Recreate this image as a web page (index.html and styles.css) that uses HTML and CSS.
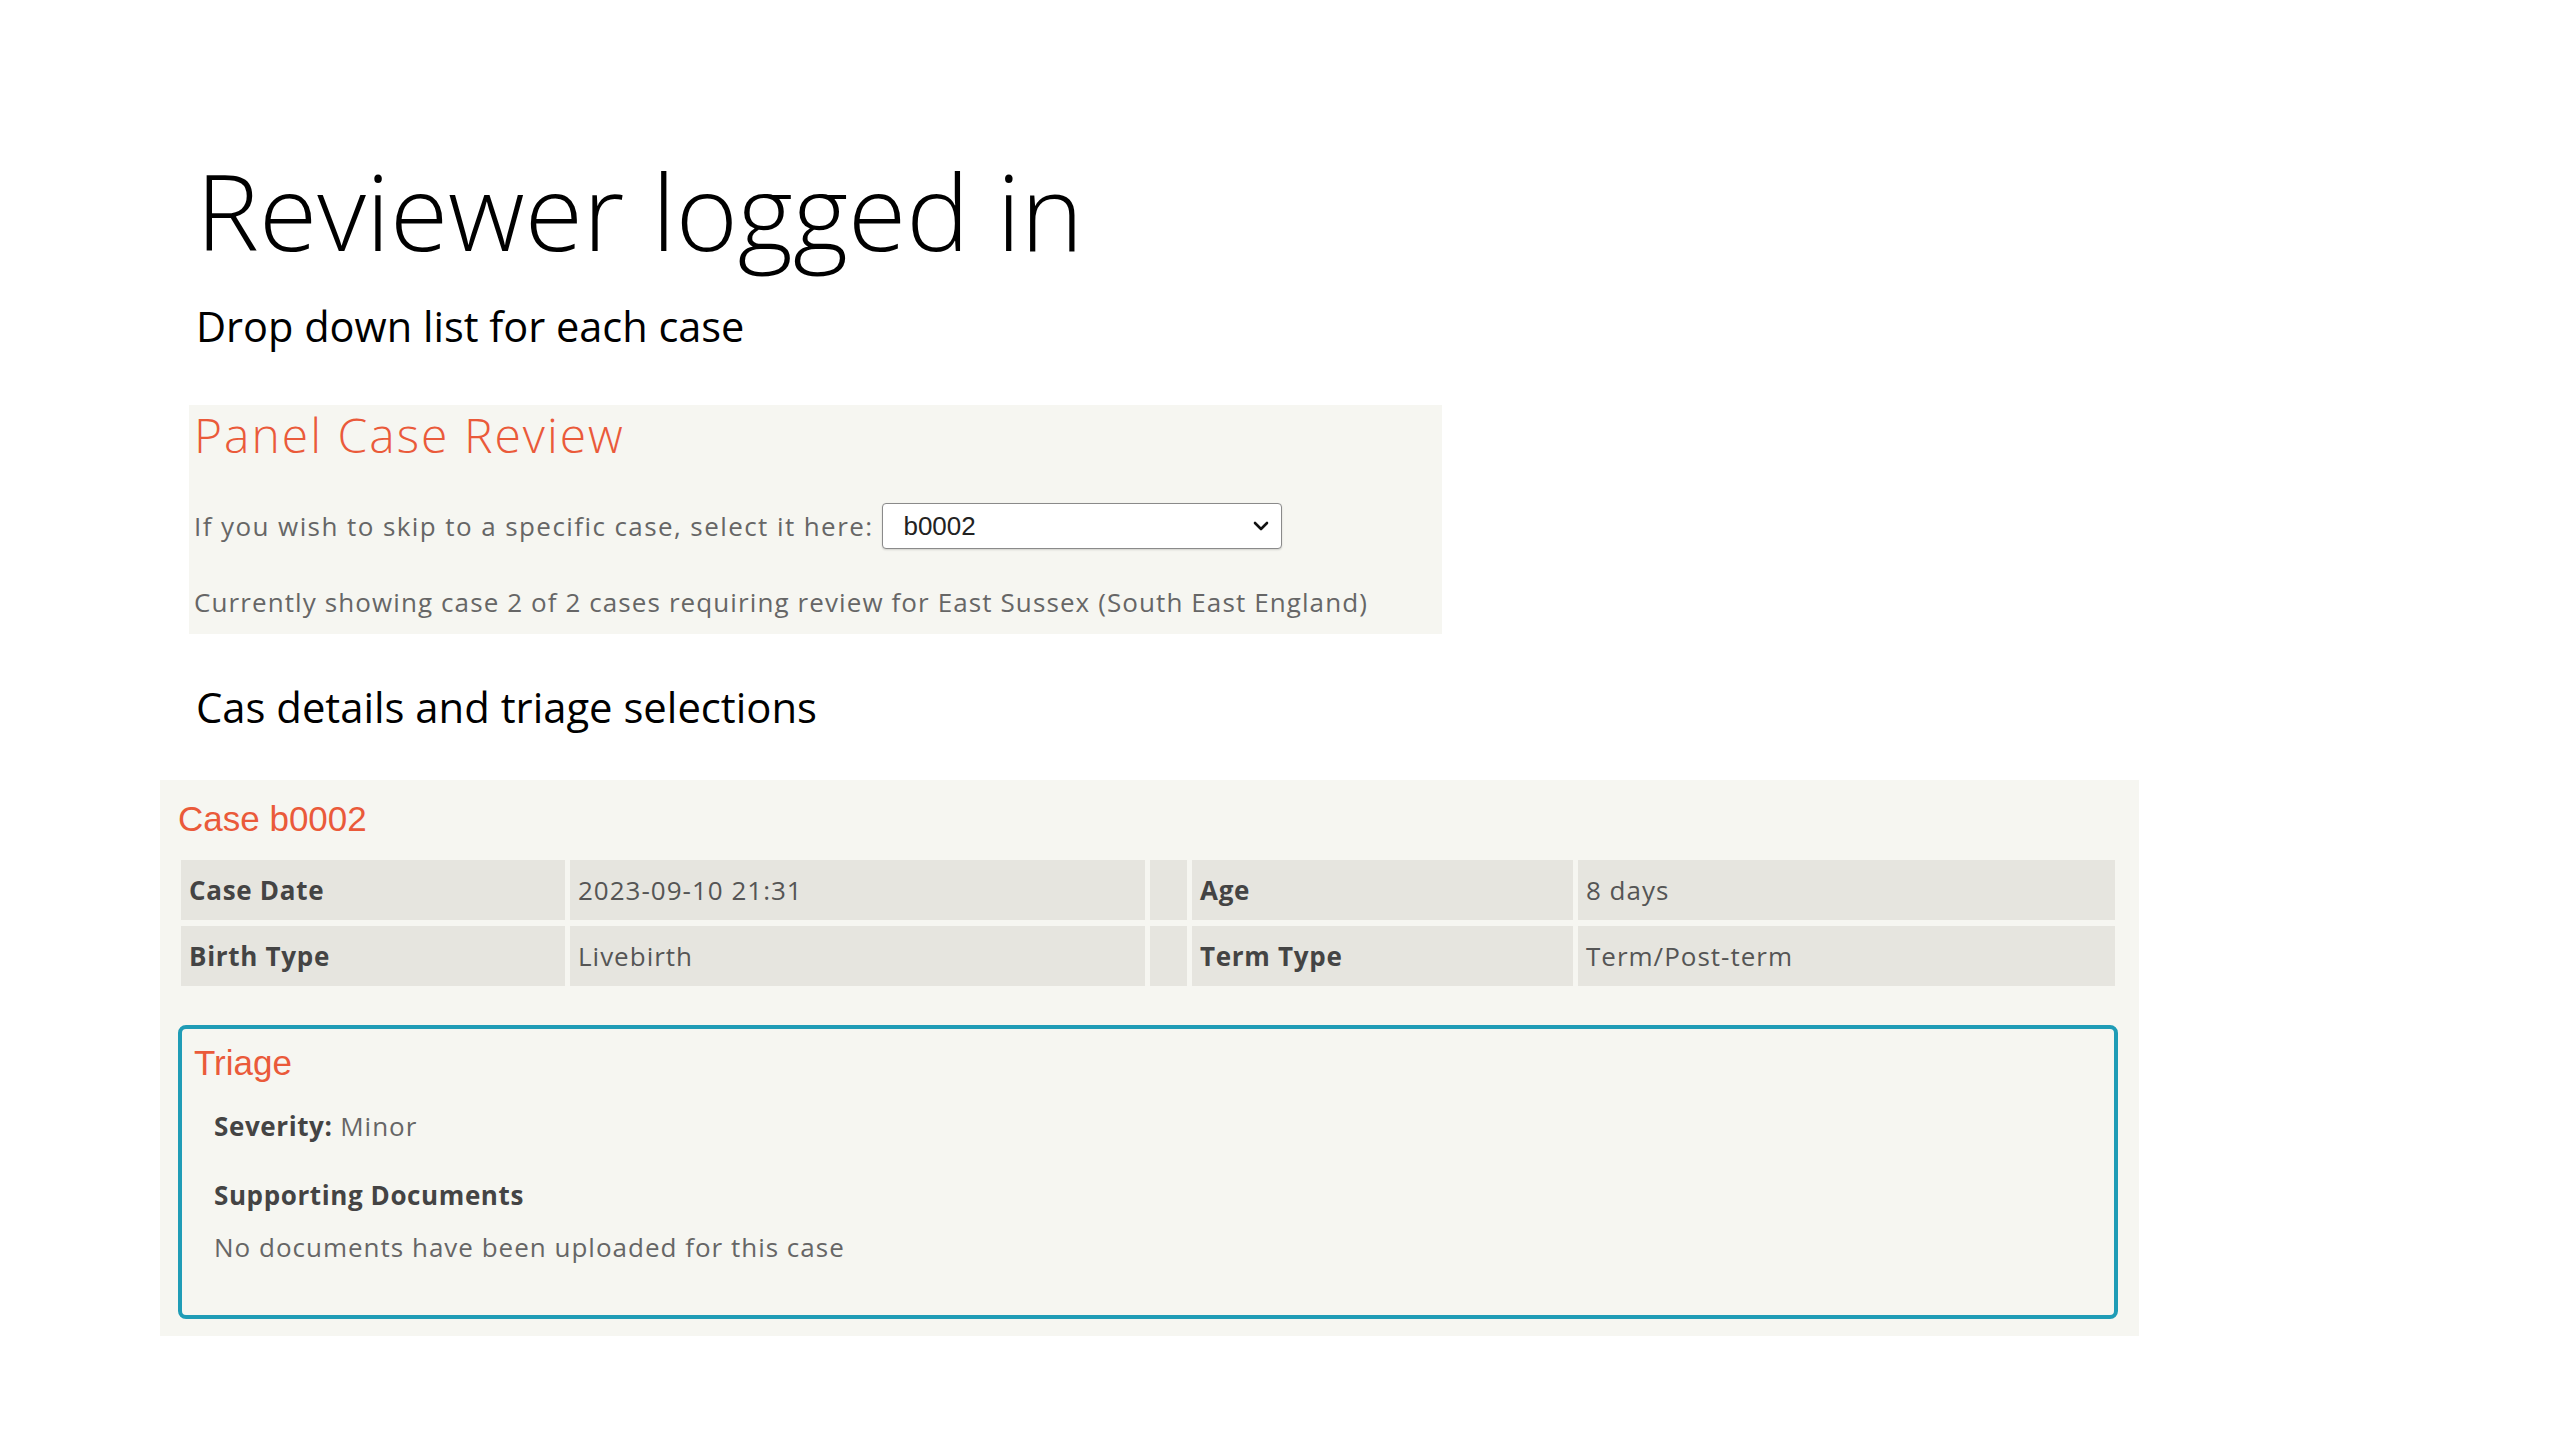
FILE: index.html
```html
<!DOCTYPE html>
<html lang="en">
<head>
<meta charset="utf-8">
<title>Reviewer logged in</title>
<link rel="stylesheet" href="styles.css">
</head>
<body>
<main class="slide">
  <h1 class="slide-title">Reviewer logged in</h1>
  <p class="slide-sub">Drop down list for each case</p>

  <section class="panel">
    <h2 class="panel-title">Panel Case Review</h2>
    <div class="skip-row">
      <span class="skip-label">If you wish to skip to a specific case, select it here:</span>
      <div class="select">
        <span class="select-value">b0002</span>
        <svg class="select-chev" viewBox="0 0 16 10" width="16" height="10"><path d="M2 2 L8 8 L14 2" fill="none" stroke="#111" stroke-width="2.6" stroke-linecap="round" stroke-linejoin="round"/></svg>
      </div>
    </div>
    <p class="panel-note">Currently showing case 2 of 2 cases requiring review for East Sussex (South East England)</p>
  </section>

  <p class="slide-sub slide-sub2">Cas details and triage selections</p>

  <section class="case">
    <h3 class="case-title">Case b0002</h3>
    <div class="case-grid">
      <div class="cell label">Case Date</div>
      <div class="cell">2023-09-10 21:31</div>
      <div class="cell"></div>
      <div class="cell label">Age</div>
      <div class="cell">8 days</div>
      <div class="cell label">Birth Type</div>
      <div class="cell">Livebirth</div>
      <div class="cell"></div>
      <div class="cell label">Term Type</div>
      <div class="cell">Term/Post-term</div>
    </div>
    <div class="triage">
      <h4 class="triage-title">Triage</h4>
      <div class="triage-body">
        <p class="triage-line"><b>Severity:</b> Minor</p>
        <p class="triage-line docs-head"><b>Supporting Documents</b></p>
        <p class="triage-line docs-note">No documents have been uploaded for this case</p>
      </div>
    </div>
  </section>
</main>
</body>
</html>
```

FILE: styles.css
```css
html, body {
  margin: 0;
  padding: 0;
  background: #ffffff;
}

body {
  font-family: "Open Sans", "Noto Sans", sans-serif;
  color: #000;
}

.slide {
  width: 2560px;
  height: 1440px;
  box-sizing: border-box;
  padding: 157px 0 0 160px;
}

.slide-title {
  margin: 0 0 0 36px;
  font-size: 106px;
  font-weight: 300;
  line-height: 106px;
  color: #000;
}

.slide-sub {
  margin: 43px 0 0 36px;
  font-size: 41.5px;
  font-weight: 400;
  line-height: 41px;
  color: #000;
}

.slide-sub2 {
  margin-top: 52px;
  font-size: 41.8px;
}

.panel {
  margin: 58px 0 0 29px;
  width: 1253px;
  box-sizing: border-box;
  padding: 6px 0 19px 5px;
  background: #f6f6f1;
}

.panel-title {
  margin: 0;
  font-size: 48px;
  font-weight: 300;
  line-height: 48px;
  letter-spacing: 2px;
  color: #ea5a3a;
}

.skip-row {
  margin-top: 44px;
  display: flex;
  align-items: center;
  gap: 9px;
  font-size: 26px;
  letter-spacing: 1.42px;
  color: #666;
}

.select {
  width: 400px;
  height: 46px;
  box-sizing: border-box;
  border: 1.5px solid #8a8a8a;
  border-radius: 4px;
  background: #fff;
  display: flex;
  align-items: center;
  justify-content: space-between;
  padding: 0 12px 0 20px;
  letter-spacing: 0;
  box-shadow: 0 1px 2px rgba(0,0,0,0.15);
}

.select-value {
  font-family: "Liberation Sans", Arial, sans-serif;
  font-size: 26px;
  color: #222;
}

.panel-note {
  margin: 41px 0 0 0;
  font-size: 26px;
  line-height: 25px;
  letter-spacing: 1.1px;
  color: #666;
}

.case {
  margin-top: 53px;
  width: 1979px;
  height: 556px;
  box-sizing: border-box;
  padding: 21px 24px 17px 18px;
  background: #f6f6f1;
}

.case-title {
  margin: 0;
  font-family: "Liberation Sans", Arial, sans-serif;
  font-size: 35px;
  font-weight: 400;
  line-height: 35px;
  color: #ea5a3a;
}

.case-grid {
  margin: 24px 0 0 3px;
  display: grid;
  grid-template-columns: 384px 575px 37px 381px 1fr;
  grid-auto-rows: 60px;
  column-gap: 5px;
  row-gap: 6px;
}

.cell {
  background: #e6e5df;
  padding: 0 8px;
  font-size: 26px;
  line-height: 60px;
  letter-spacing: 1px;
  color: #555;
  white-space: nowrap;
}

.cell.label {
  font-weight: 700;
  letter-spacing: 0.7px;
  color: #444;
}

.triage {
  margin-top: 39px;
  margin-right: -3px;
  height: 294px;
  box-sizing: border-box;
  border: 4px solid #1f9cb6;
  border-radius: 8px;
  padding: 16px 12px 0 12px;
}

.triage-title {
  margin: 0;
  font-family: "Liberation Sans", Arial, sans-serif;
  font-size: 35px;
  font-weight: 400;
  line-height: 35px;
  color: #ea5a3a;
}

.triage-body {
  padding-left: 20px;
}

.triage-line {
  margin: 34px 0 0 0;
  font-size: 26px;
  line-height: 25px;
  letter-spacing: 1px;
  color: #666;
}

.triage-line b {
  font-weight: 700;
  letter-spacing: 0.6px;
  color: #444;
}

.docs-head {
  margin-top: 44px;
}

.docs-note {
  margin-top: 27px;
}
```
